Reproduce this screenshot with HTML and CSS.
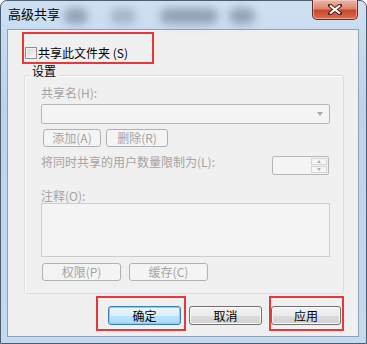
FILE: index.html
```html
<!DOCTYPE html>
<html lang="zh-CN">
<head>
    <meta charset="UTF-8">
    <title>高级共享</title>
    <link rel="stylesheet" href="styles.css">
</head>
<body>
    <div class="window">
        <div class="titlebar">
            <span class="title">高级共享</span>
            <span class="blur b1"></span>
            <span class="blur b2"></span>
            <span class="blur b3"></span>
            <span class="blur b4"></span>
            <button class="close">
                <svg width="14" height="11" viewBox="0 0 14 11">
                    <path d="M2 1.5 L12 9.5 M12 1.5 L2 9.5" stroke="#5a2016" stroke-width="4" stroke-linecap="square" fill="none"/>
                    <path d="M2 1.5 L12 9.5 M12 1.5 L2 9.5" stroke="#fff" stroke-width="2.2" fill="none"/>
                </svg>
            </button>
        </div>

        <div class="client">
            <div class="mark share-row">
                <label class="check-row">
                    <span class="checkbox"></span>
                    <span>共享此文件夹 (S)</span>
                </label>
            </div>

            <div class="group">
                <span class="legend">设置</span>
                <div class="dim">共享名(H):</div>
                <div class="combo"><span class="arrow"></span></div>
                <div class="btn-row first">
                    <button class="btn off w-add">添加(A)</button>
                    <button class="btn off w-del">删除(R)</button>
                </div>
                <div class="limit-row">
                    <span class="dim">将同时共享的用户数量限制为(L):</span>
                    <div class="spinner">
                        <div class="spin">
                            <span class="up"></span>
                            <span class="down"></span>
                        </div>
                    </div>
                </div>
                <div class="dim note-label">注释(O):</div>
                <div class="memo"></div>
                <div class="btn-row last">
                    <button class="btn off w-perm">权限(P)</button>
                    <button class="btn off w-perm">缓存(C)</button>
                </div>
            </div>

            <div class="footer">
                <div class="mark ok-wrap">
                    <button class="btn main default w-ok">确定</button>
                </div>
                <button class="btn main w-cancel">取消</button>
                <div class="mark apply-wrap">
                    <button class="btn main w-apply">应用</button>
                </div>
            </div>
        </div>
    </div>
</body>
</html>
```

FILE: styles.css
```css
* {
    box-sizing: border-box;
}
body {
    margin: 0;
    background: #ffffff;
    font-family: "Noto Sans CJK SC", "Liberation Sans", sans-serif;
    font-size: 12px;
    line-height: 14px;
}
.window {
    width: 367px;
    height: 344px;
    border: 1px solid #4b5d70;
    border-radius: 7px 7px 0 0;
    background: linear-gradient(#cfe0f2, #bcd3ea 30%, #c6daee);
    display: flex;
    flex-direction: column;
}
.titlebar {
    height: 28px;
    display: flex;
    align-items: flex-start;
    padding-left: 7px;
}
.title {
    margin-top: 6px;
    font-size: 13px;
    color: #000;
}
.blur {
    height: 16px;
    margin-top: 7px;
    border-radius: 8px;
    background: #7f8fa5;
    filter: blur(4px);
    opacity: 0.75;
}
.b1 { width: 24px; margin-left: 4px; }
.b2 { width: 26px; margin-left: 22px; opacity: 0.5; }
.b3 { width: 58px; margin-left: 24px; }
.b4 { width: 26px; margin-left: 11px; }
.close {
    margin-left: auto;
    margin-right: 8px;
    margin-top: -1px;
    width: 46px;
    height: 20px;
    padding: 0;
    border: 1px solid #6b2a1e;
    border-top: none;
    border-radius: 0 0 5px 5px;
    background: linear-gradient(#ecb6a8, #dc866f 45%, #c8462d 55%, #da6f52);
    box-shadow: inset 0 0 0 1px rgba(255, 220, 210, 0.5);
    display: flex;
    align-items: center;
    justify-content: center;
}
.client {
    margin-left: 6px;
    width: 352px;
    height: 308px;
    border: 1px solid #8ea2b6;
    background: #f0f0f0;
    padding-top: 2px;
}
.mark {
    border: 2px solid #e5383b;
}
.share-row {
    margin-left: 14px;
    width: 132px;
    height: 32px;
    padding: 12px 0 0 1px;
}
.check-row {
    display: flex;
    align-items: center;
    gap: 1px;
    color: #000;
}
.checkbox {
    width: 12px;
    height: 12px;
    border: 1px solid #8e8f8f;
    background: linear-gradient(135deg, #d8d8d8, #f7f7f7);
    box-shadow: inset 0 0 0 1px #f4f4f4;
}
.group {
    position: relative;
    margin: 11px 0 0 16px;
    width: 320px;
    height: 219px;
    border: 1px solid #d5dfe5;
    border-radius: 3px;
    box-shadow: inset 1px 1px 0 #fff;
    padding: 10px 13px 0 16px;
}
.legend {
    position: absolute;
    top: -12px;
    left: 5px;
    padding: 0 2px;
    background: #f0f0f0;
    color: #000;
}
.dim {
    color: #a3a3a3;
}
.combo {
    position: relative;
    margin-top: 4px;
    height: 20px;
    border: 1px solid #b7b7b7;
    border-radius: 2px;
    background: #f4f4f4;
}
.arrow {
    position: absolute;
    right: 6px;
    top: 7px;
    border-left: 3px solid transparent;
    border-right: 3px solid transparent;
    border-top: 4px solid #a8a8a8;
}
.btn {
    font-family: inherit;
    font-size: 12px;
    line-height: 14px;
    padding: 0;
    border-radius: 3px;
}
.btn.off {
    height: 18px;
    border: 1px solid #adb2b5;
    background: #f4f4f4;
    color: #a3a3a3;
}
.btn-row {
    display: flex;
}
.btn-row.first {
    margin: 5px 0 0 2px;
    gap: 5px;
}
.btn-row.last {
    margin: 6px 0 0 1px;
    gap: 8px;
}
.w-add { width: 58px; }
.w-del { width: 62px; }
.w-perm { width: 79px; }
.limit-row {
    display: flex;
    justify-content: space-between;
    margin-top: 9px;
    height: 18px;
}
.limit-row .dim {
    margin-top: -1px;
}
.spinner {
    width: 57px;
    height: 19px;
    margin-right: 1px;
    border: 1px solid #b7b7b7;
    border-radius: 2px;
    background: #f4f4f4;
    display: flex;
    justify-content: flex-end;
    padding: 1px;
}
.spin {
    width: 16px;
    display: flex;
    flex-direction: column;
    gap: 1px;
}
.spin span {
    flex: 1;
    border: 1px solid #d4d4d4;
    background: #f6f6f6;
    display: flex;
    align-items: center;
    justify-content: center;
}
.spin span::after {
    content: "";
    border-left: 2px solid transparent;
    border-right: 2px solid transparent;
}
.spin .up::after {
    border-bottom: 3px solid #b0b0b0;
}
.spin .down::after {
    border-top: 3px solid #b0b0b0;
}
.note-label {
    margin-top: 15px;
}
.memo {
    height: 54px;
    border: 1px solid #cdcdcd;
    background: #f4f4f4;
}
.footer {
    display: flex;
    margin: 2px 0 0 88px;
}
.ok-wrap {
    height: 35px;
    padding: 8px 3px 0 10px;
}
.apply-wrap {
    margin-left: 7px;
    height: 35px;
    padding: 8px 1px 0 0;
}
.btn.main {
    height: 19px;
    border: 1px solid #707070;
    color: #000;
    background: linear-gradient(#f2f2f2, #ebebeb 50%, #dddddd 51%, #cfcfcf);
    box-shadow: inset 0 0 0 1px #fbfbfb;
}
.btn.main.default {
    border-color: #3c7fb1;
    background: linear-gradient(#eaf6fd, #d9f0fc 50%, #bee6fd 51%, #a7d9f5);
    box-shadow: inset 0 0 0 1px #8fcdef;
}
.w-ok { width: 73px; }
.w-cancel { width: 73px; margin: 10px 0 0 3px; }
.w-apply { width: 70px; }
```
